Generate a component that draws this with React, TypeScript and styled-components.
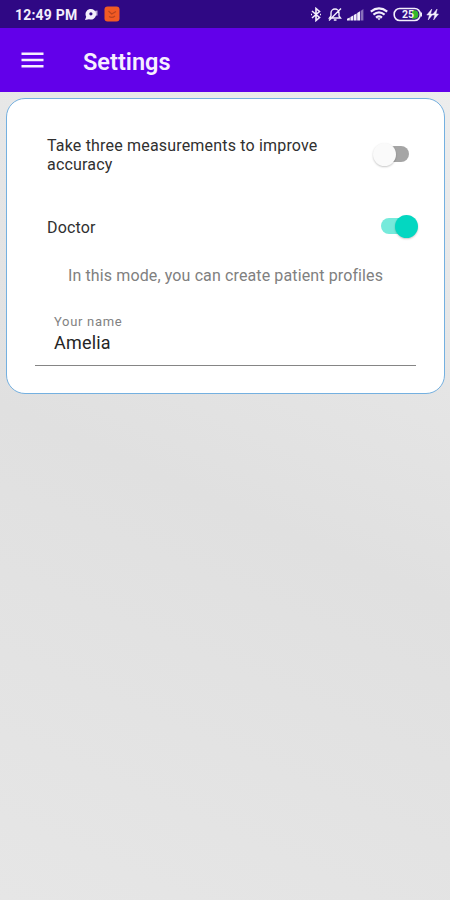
import React from "react";
import styled, { createGlobalStyle } from "styled-components";

const GlobalStyle = createGlobalStyle`
  * { box-sizing: border-box; }
  body { margin: 0; font-family: Roboto, "Liberation Sans", sans-serif; }
`;

const Screen = styled.div`
  width: 450px;
  height: 900px;
  overflow: hidden;
  background: linear-gradient(24deg, #e6e6e6 0%, #e0e0e0 45%, #e5e5e5 65%, #efefef 100%);
`;

const StatusBar = styled.div`
  height: 28px;
  display: flex;
  align-items: center;
  justify-content: space-between;
  padding: 0 11px 0 15px;
  background: #2f0884;
  color: #f3effc;
`;

const StatusGroup = styled.div<{ $gap: number }>`
  display: flex;
  align-items: center;
  gap: ${(p) => p.$gap}px;
`;

const PowerGroup = styled.div`
  display: flex;
  align-items: center;
  gap: 3px;
`;

const Clock = styled.span`
  font-size: 14px;
  line-height: 28px;
  font-weight: 700;
  letter-spacing: 0.2px;
  width: 63px;
  margin-right: 1px;
  white-space: nowrap;
  padding-top: 1px;
`;

const AppBar = styled.header`
  height: 64px;
  display: flex;
  align-items: center;
  padding-left: 21px;
  gap: 39px;
  background: #6200ea;
  color: #f6effe;
`;

const MenuButton = styled.button`
  border: 0;
  padding: 0;
  background: none;
  color: inherit;
  display: flex;
`;

const Title = styled.h1`
  margin: 3px 0 0;
  font-size: 23.5px;
  line-height: 30px;
  font-weight: 600;
  letter-spacing: 0;
`;

const Card = styled.main`
  margin: 6px 5px 0 6px;
  height: 296px;
  border: 1.5px solid #74b0e0;
  border-radius: 19px;
  background: #fff;
  padding: 36px 28px 0 28px;
`;

const SettingRow = styled.div<{ $gapAbove?: number }>`
  height: 38px;
  margin-top: ${(p) => p.$gapAbove ?? 0}px;
  display: flex;
  align-items: center;
  justify-content: space-between;
  padding-left: 12px;
`;

const Label = styled.div`
  padding-top: 2px;
  font-size: 16px;
  line-height: 19px;
  letter-spacing: 0.18px;
  color: #303030;
  white-space: pre-line;
`;

const Hint = styled.p`
  margin: 21px 0 0 33px;
  font-size: 16px;
  line-height: 19px;
  letter-spacing: 0.12px;
  color: #808080;
  white-space: nowrap;
`;

const Track = styled.div<{ $on?: boolean }>`
  width: 32px;
  height: 16px;
  flex: none;
  display: flex;
  align-items: center;
  justify-content: ${(p) => (p.$on ? "flex-end" : "flex-start")};
  margin-right: ${(p) => (p.$on ? 3 : 7)}px;
  border-radius: 8px;
  background: ${(p) => (p.$on ? "#76eadb" : "#a5a5a5")};
`;

const Thumb = styled.div<{ $on?: boolean }>`
  width: 23px;
  height: 23px;
  flex: none;
  margin: ${(p) => (p.$on ? "0 -5px 0 0" : "0 0 0 -4px")};
  border-radius: 50%;
  background: ${(p) => (p.$on ? "#03d7c1" : "#fafafa")};
  box-shadow: 0 1px 2px rgba(0, 0, 0, 0.22);
`;

const Field = styled.label`
  display: flex;
  flex-direction: column;
  height: 52px;
  margin-top: 29px;
  padding-left: 19px;
  border-bottom: 1px solid #858585;
`;

const FieldName = styled.span`
  font-size: 13px;
  line-height: 16px;
  letter-spacing: 0.7px;
  color: #828282;
`;

const FieldValue = styled.span`
  margin-top: 2px;
  font-size: 18px;
  line-height: 22px;
  letter-spacing: 0.2px;
  color: #252525;
`;

function Switch({ on }: { on?: boolean }) {
  return (
    <Track $on={on} role="switch" aria-checked={!!on}>
      <Thumb $on={on} />
    </Track>
  );
}

const BubbleIcon = () => (
  <svg width="15" height="14" viewBox="0 0 15 14">
    <path d="M1 13 2.2 9.8A5.3 5.3 0 1 1 5 12.2Z" fill="currentColor" />
    <path d="m10 4 3.5-.5v5L10 9Z" fill="currentColor" opacity=".7" />
    <circle cx="6.9" cy="6.8" r="1.6" fill="#2f0884" />
  </svg>
);

const AppBadge = () => (
  <svg width="16" height="16" viewBox="0 0 16 16">
    <rect x=".5" y=".5" width="15" height="15" rx="3" fill="#f15a24" />
    <path d="m4.5 5 3.2 3L12 5.5M5 10.5q3 2 6-.5" fill="none" stroke="#b8431f" strokeWidth="1.1" />
  </svg>
);

const BluetoothIcon = () => (
  <svg width="12" height="15" viewBox="0 0 12 15" fill="none" stroke="currentColor" strokeWidth="1.6">
    <path d="m2 4 7.5 6.5L6 13.5v-12l3.5 3L2 11" />
    <path d="M1 7.5h1M10 7.5h1" />
  </svg>
);

const MutedBellIcon = () => (
  <svg width="14" height="15" viewBox="0 0 14 15" fill="none" stroke="currentColor" strokeWidth="1.4">
    <path d="M1.5 11h11L11 9V6a4 4 0 0 0-8 0v3ZM5.8 13h2.7M1 13.5 13 1.5" />
  </svg>
);

const SignalIcon = () => (
  <svg width="17" height="13" viewBox="0 0 17 13" fill="currentColor">
    <path d="M0 12.5V10.8L2.8 9.5v3zM3.4 12.5V9L6.2 7.5v5zM6.8 12.5V7L9.6 5.5v7zM10.2 12.5V5L13 3.3v9.2z" />
    <path d="M13.6 12.5V3L16.4 1v11.5z" opacity=".45" />
  </svg>
);

const WifiIcon = () => (
  <svg width="18" height="14" viewBox="0 0 18 14" fill="none" stroke="currentColor" strokeWidth="2.2">
    <path d="M.8 4.6q8.2-6.4 16.4 0M3.4 7.7q5.6-4.5 11.2 0M6 10.6q3-2.4 6 0" />
    <path d="m7.2 11.3 1.8 2 1.8-2Z" fill="currentColor" stroke="none" />
  </svg>
);

const BatteryIcon = () => (
  <svg width="30" height="15" viewBox="0 0 30 15">
    <rect x="1.2" y="1.5" width="26" height="12" rx="5.5" fill="none" stroke="currentColor" strokeWidth="1.6" />
    <path d="M19 3.2h2.5Q25.4 3.2 25.4 7.5t-3.9 4.3H19Z" fill="#35b82c" />
    <path d="M28.4 5.5v4" stroke="currentColor" strokeWidth="1.2" />
    <text x="9" y="11.2" fontSize="10.5" fontWeight="700" fill="currentColor">25</text>
  </svg>
);

const ChargeIcon = () => (
  <svg width="13" height="13" viewBox="0 0 13 13" fill="currentColor" stroke="currentColor" strokeWidth=".5">
    <path d="M5.8 1 .8 7h2.6l-1.2 5 4.8-6H4.5ZM11.1 1 6.2 7h2.6l-1.2 5 4.9-6H10Z" />
  </svg>
);

const MenuIcon = () => (
  <svg width="23" height="18" viewBox="0 0 23 18" stroke="currentColor" strokeWidth="2.6">
    <path d="M.5 2.7h22M.5 9h22M.5 15.3h22" />
  </svg>
);

export default function App() {
  return (
    <>
      <GlobalStyle />
      <Screen>
        <StatusBar>
          <StatusGroup $gap={5}>
            <Clock>12:49 PM</Clock>
            <BubbleIcon />
            <AppBadge />
          </StatusGroup>
          <StatusGroup $gap={5.5}>
            <BluetoothIcon />
            <MutedBellIcon />
            <SignalIcon />
            <WifiIcon />
            <PowerGroup>
              <BatteryIcon />
              <ChargeIcon />
            </PowerGroup>
          </StatusGroup>
        </StatusBar>
        <AppBar>
          <MenuButton aria-label="Menu">
            <MenuIcon />
          </MenuButton>
          <Title>Settings</Title>
        </AppBar>
        <Card>
          <SettingRow>
            <Label>{"Take three measurements to improve\naccuracy"}</Label>
            <Switch />
          </SettingRow>
          <SettingRow $gapAbove={34}>
            <Label>Doctor</Label>
            <Switch on />
          </SettingRow>
          <Hint>In this mode, you can create patient profiles</Hint>
          <Field>
            <FieldName>Your name</FieldName>
            <FieldValue>Amelia</FieldValue>
          </Field>
        </Card>
      </Screen>
    </>
  );
}
